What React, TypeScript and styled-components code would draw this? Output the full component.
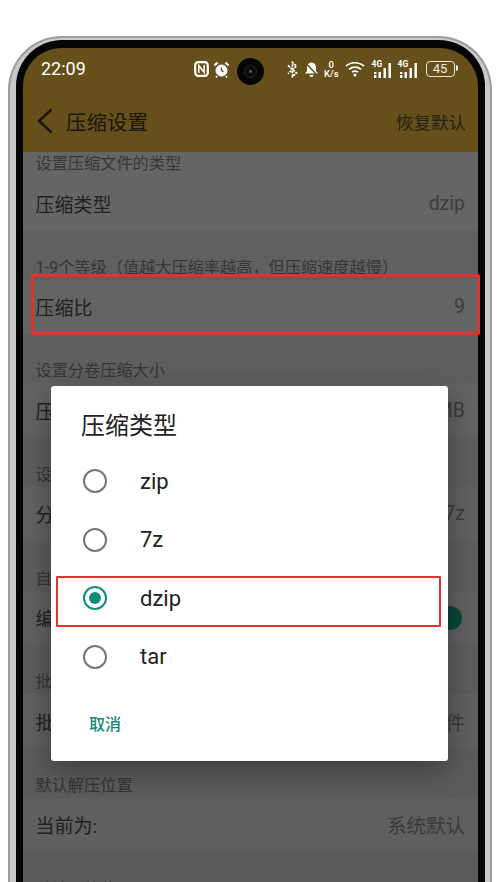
import styled, { createGlobalStyle } from "styled-components";

const FONT = `Roboto, "Noto Sans CJK SC", sans-serif`;

const groups = [
  { label: "设置压缩文件的类型", title: "压缩类型", value: "dzip", first: true },
  { label: "1-9个等级（值越大压缩率越高，但压缩速度越慢）", title: "压缩比", value: "9" },
  { label: "设置分卷压缩大小", title: "压缩大小", value: "MB" },
  { label: "设置分卷压缩格式", title: "分卷格式", value: ".7z" },
  { label: "自动识别文件编码", title: "编码识别", toggle: true },
  { label: "批量压缩设置", title: "批量压缩", value: "单个文件" },
  { label: "默认解压位置", title: "当前为:", value: "系统默认" },
  { label: "默认压缩位置", title: "当前为:", value: "系统默认" },
];

const options = ["zip", "7z", "dzip", "tar"];

const SignalIcon = () => (
  <svg width="21" height="17" viewBox="0 0 21 17" fill="#fff">
    <rect x="1" y="11" width="2.4" height="2" />
    <rect x="1" y="14" width="2.4" height="3" />
    <rect x="5.500" y="11" width="2.4" height="6" />
    <rect x="10.500" y="7" width="2.4" height="10" />
    <rect x="15.500" y="2" width="2.4" height="15" />
  </svg>
);

const App = () => {
  return (
    <Page>
      <GlobalStyle />
      <Frame>
        <Bezel>
          <Screen>
            <StatusBar>
              <Time>22:09</Time>
              <NotifyIcons>
                <svg width="15" height="16" viewBox="0 0 15 16" fill="none" stroke="#fff">
                  <rect x="1.200" y="1.200" width="12.600" height="13.600" rx="3" strokeWidth="2.200" />
                  <path d="M4.800 12V4.500l5.400 7V4" strokeWidth="1.500" />
                </svg>
                <svg width="17" height="17" viewBox="0 0 17 17" fill="#fff" stroke="#fff">
                  <circle cx="8.500" cy="9.500" r="5.500" strokeWidth="1" />
                  <path d="M1.500 4.500 4.500 1.500M15.500 4.500l-3-3" strokeWidth="2.200" />
                  <path d="M8.500 6.500v3l2 1.500" stroke="#65501b" strokeWidth="1.400" fill="none" />
                  <path d="M4 15l-1 1.500M13 15l1 1.500" strokeWidth="1.500" />
                </svg>
              </NotifyIcons>
              <Camera>
                <CameraLens />
              </Camera>
              <SystemIcons>
                <svg width="11" height="17" viewBox="0 0 11 17" fill="none" stroke="#fff" strokeWidth="1.700" strokeDasharray="2.400 0.900">
                  <path d="M1 4.500 9.500 12 5.500 15.500v-14L9.500 5 1 12.500" />
                </svg>
                <svg width="17" height="17" viewBox="0 0 17 17" fill="#fff">
                  <path d="M8.500 1.500c-3 0-4.500 2.200-4.500 5v3.500L2 12.500h13L13 10V6.500c0-2.800-1.500-5-4.500-5Z" />
                  <path d="M6.500 14h4c0 1.200-.8 2-2 2s-2-.8-2-2Z" />
                  <path d="M2 1.500 15.500 15.500" stroke="#65501b" strokeWidth="1.500" />
                </svg>
                <SpeedStack>
                  <span>0</span>
                  <span>K/s</span>
                </SpeedStack>
                <WifiIcon width="20" height="16" viewBox="0 0 20 16" fill="none" stroke="#fff" strokeWidth="1.700">
                  <path d="M1 5.200C6 .6 14 .6 19 5.200" />
                  <path d="M4 8.400c3.500-3 8.500-3 12 0" />
                  <path d="M7 11.200c1.800-1.400 4.200-1.400 6 0" />
                  <circle cx="10" cy="14" r="1.500" fill="#fff" stroke="none" />
                </WifiIcon>
                <Signal>
                  <SignalLabel>4G</SignalLabel>
                  <SignalIcon />
                </Signal>
                <Signal>
                  <SignalLabel>4G</SignalLabel>
                  <SignalIcon />
                </Signal>
                <Battery>45</Battery>
              </SystemIcons>
            </StatusBar>

            <AppBody>
              <Toolbar>
                <svg width="16" height="26" viewBox="0 0 16 26" fill="none" stroke="#453a22" strokeWidth="2.600">
                  <path d="M14.500 1.500 2 13l12.500 11.500" />
                </svg>
                <ToolbarTitle>压缩设置</ToolbarTitle>
                <ToolbarAction>恢复默认</ToolbarAction>
              </Toolbar>

              {groups.map((group) => (
                <section key={group.label}>
                  <GroupLabel $first={group.first}>{group.label}</GroupLabel>
                  <Row>
                    <RowTitle>{group.title}</RowTitle>
                    {group.toggle ? <SwitchKnob /> : <RowValue>{group.value}</RowValue>}
                  </Row>
                </section>
              ))}

              <Dim>
                <Dialog>
                  <DialogTitle>压缩类型</DialogTitle>
                  {options.map((option) => (
                    <Option key={option}>
                      <Radio $checked={option === "dzip"} />
                      <OptionText>{option}</OptionText>
                    </Option>
                  ))}
                  <DialogFooter>
                    <CancelButton>取消</CancelButton>
                  </DialogFooter>
                  <OptionHighlight />
                </Dialog>
              </Dim>
            </AppBody>
          </Screen>
        </Bezel>
        <RatioHighlight />
      </Frame>
    </Page>
  );
};

export default App;

const GlobalStyle = createGlobalStyle`
  html, body {
    margin: 0;
    background: #fff;
  }
`;

const Page = styled.div`
  width: 500px;
  height: 882px;
  padding-top: 36px;
  box-sizing: border-box;
  overflow: hidden;
  background: #fff;
  font-family: ${FONT};
`;

const Frame = styled.div`
  position: relative;
  box-sizing: border-box;
  width: 484px;
  height: 860px;
  margin-left: 8px;
  padding: 2px 5px 0 6px;
  border: 2px solid #9c9c9c;
  border-bottom: 0;
  border-radius: 54px 54px 0 0;
  background: #c9c9c9;
`;

const Bezel = styled.div`
  height: 100%;
  box-sizing: border-box;
  padding: 8px 7px 0;
  border-radius: 46px 46px 0 0;
  background: #050505;
`;

const Screen = styled.div`
  display: flex;
  flex-direction: column;
  height: 100%;
  overflow: hidden;
  border-radius: 38px 38px 0 0;
`;

const StatusBar = styled.div`
  display: flex;
  align-items: center;
  flex: none;
  box-sizing: border-box;
  height: 40px;
  padding: 2px 21px 0 18px;
  background: #65501b;
  color: #fff;
`;

const Time = styled.span`
  width: 50px;
  font-size: 18px;
  line-height: 38px;
`;

const NotifyIcons = styled.div`
  display: flex;
  align-items: center;
  gap: 4px;
  margin-left: 103px;
`;

const Camera = styled.div`
  display: flex;
  align-items: center;
  justify-content: center;
  width: 27px;
  height: 27px;
  margin: 4px 0 0 7px;
  border-radius: 50%;
  background: #060606;
`;

const CameraLens = styled.div`
  width: 11px;
  height: 11px;
  border: 1px solid #23262b;
  border-radius: 50%;
  background: radial-gradient(circle, #555 0 1px, #0b0c10 2px);
`;

const SystemIcons = styled.div`
  display: flex;
  align-items: center;
  gap: 5px;
  margin-left: 23px;
`;

const SpeedStack = styled.div`
  display: flex;
  flex-direction: column;
  align-items: center;
  margin-left: -1px;
  font-size: 9.500px;
  line-height: 9.500px;
  font-weight: 500;
`;

const WifiIcon = styled.svg`
  margin: 0 3px 0 1px;
`;

const Signal = styled.div`
  position: relative;
  width: 21px;
  height: 17px;

  svg {
    display: block;
  }
`;

const SignalLabel = styled.span`
  position: absolute;
  top: -2px;
  left: -1px;
  font-size: 8.500px;
  line-height: 10px;
  font-weight: 700;
`;

const Battery = styled.div`
  position: relative;
  box-sizing: border-box;
  width: 29px;
  height: 16px;
  margin-left: 1px;
  border: 1.500px solid #e8e3d6;
  border-radius: 4px;
  color: #f2eee2;
  font-size: 13px;
  line-height: 13px;
  text-align: center;

  &::after {
    content: "";
    position: absolute;
    top: 3px;
    right: -4.500px;
    width: 2px;
    height: 6px;
    border-radius: 0 2px 2px 0;
    background: #f2eee2;
  }
`;

const AppBody = styled.div`
  position: relative;
  flex: 1;
  overflow: hidden;
  background: #fff;
`;

const Toolbar = styled.div`
  display: flex;
  align-items: center;
  box-sizing: border-box;
  height: 64px;
  padding: 2px 12px 0 14px;
  background: #fdc844;
`;

const ToolbarTitle = styled.h1`
  flex: 1;
  margin: 0 0 0 13px;
  color: #453a22;
  font-size: 20.500px;
  font-weight: 400;
`;

const ToolbarAction = styled.span`
  color: #5f5232;
  font-size: 17.500px;
`;

const GroupLabel = styled.div<{ $first?: boolean }>`
  display: flex;
  align-items: flex-end;
  box-sizing: border-box;
  height: ${(p) => (p.$first ? "24px" : "49.670px")};
  padding: 0 13px ${(p) => (p.$first ? "2px" : "2px")} 12.500px;
  background: ${(p) => (p.$first ? "#ffffff" : "#f3f3f3")};
  color: #8d8d8d;
  font-size: 16.200px;
  line-height: 20px;
  white-space: nowrap;
`;

const Row = styled.div`
  display: flex;
  align-items: center;
  justify-content: space-between;
  height: 54px;
  padding: 0 13px 0 12.500px;
  background: #ffffff;
`;

const RowTitle = styled.span`
  color: #565656;
  font-size: 19px;
`;

const RowValue = styled.span`
  color: #9b9b9b;
  font-size: 19.500px;
`;

const SwitchKnob = styled.span`
  width: 24px;
  height: 24px;
  margin-right: 3px;
  border-radius: 50%;
  background: #1fb89c;
`;

const Dim = styled.div`
  position: absolute;
  inset: 0;
  padding: 298px 0 0 28px;
  background: linear-gradient(rgba(0, 0, 0, 0.6), rgba(0, 0, 0, 0.63));
`;

const Dialog = styled.div`
  position: relative;
  box-sizing: border-box;
  width: 397px;
  height: 375px;
  padding-top: 24px;
  border-radius: 3px;
  background: #fff;
  box-shadow: 0 8px 30px rgba(0, 0, 0, 0.35);
`;

const DialogTitle = styled.h2`
  height: 42px;
  margin: 0;
  padding-left: 30px;
  color: #212121;
  font-size: 24px;
  font-weight: 400;
  line-height: 32px;
`;

const Option = styled.div`
  display: flex;
  align-items: center;
  height: 58.500px;
  padding-left: 32px;
`;

const Radio = styled.span<{ $checked?: boolean }>`
  display: flex;
  align-items: center;
  justify-content: center;
  box-sizing: border-box;
  width: 24px;
  height: 24px;
  border: 2.500px solid ${(p) => (p.$checked ? "#0e8d7c" : "#757575")};
  border-radius: 50%;

  &::after {
    content: "";
    display: ${(p) => (p.$checked ? "block" : "none")};
    width: 12px;
    height: 12px;
    border-radius: 50%;
    background: #0e8d7c;
  }
`;

const OptionText = styled.span`
  margin-left: 33px;
  color: #212121;
  font-size: 22px;
`;

const DialogFooter = styled.div`
  padding: 27px 0 0 38px;
`;

const CancelButton = styled.span`
  color: #0f8a7a;
  font-size: 16px;
  font-weight: 500;
  line-height: 24px;
`;

const OptionHighlight = styled.div`
  position: absolute;
  top: 190px;
  left: 5px;
  box-sizing: border-box;
  width: 385px;
  height: 51px;
  border: 2px solid #e2342f;
  border-radius: 1px;
`;

const RatioHighlight = styled.div`
  position: absolute;
  top: 236px;
  left: 21px;
  box-sizing: border-box;
  width: 449px;
  height: 61px;
  border: 3px solid #d13a2c;
  border-radius: 2px;
`;
